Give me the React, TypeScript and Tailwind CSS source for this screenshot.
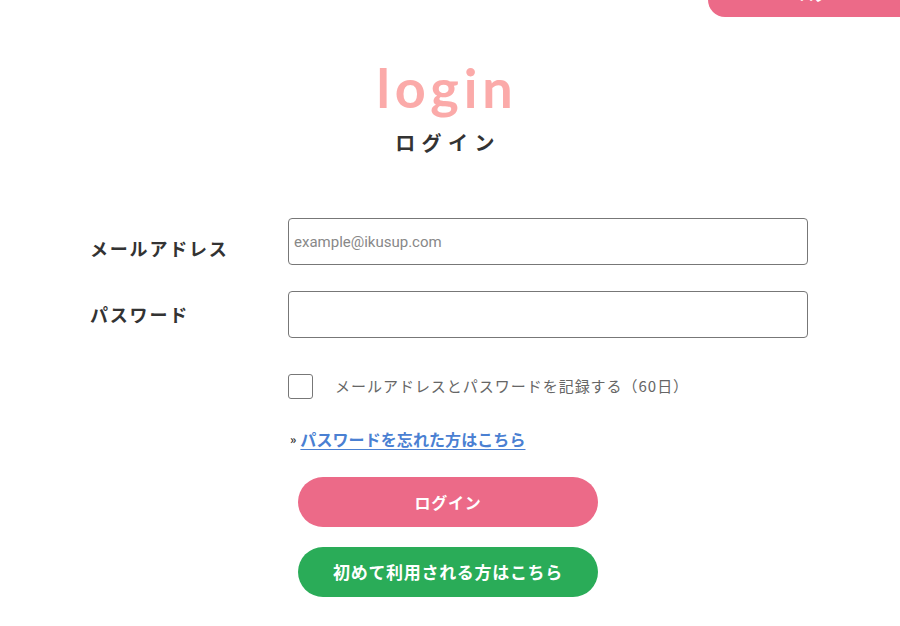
import React from 'react'

const jp = "font-['Noto_Sans_CJK_JP','Noto_Sans',sans-serif]"

export default function App() {
  return (
    <div className={`w-[900px] h-[626px] overflow-hidden bg-white text-[#333] ${jp}`}>
      {/* header remnant */}
      <div className="flex justify-end">
        <div className="w-[192px] h-[17px] bg-[#ec6a88] rounded-bl-[17px] overflow-hidden flex justify-center">
          <span className="text-white text-[15px] font-bold leading-none -mt-[14px] ml-[20px]">ログ</span>
        </div>
      </div>

      {/* title */}
      <div className="flex flex-col items-center pt-[43px] ml-[-6px]">
        <h1 className="font-['Lato',sans-serif] font-bold text-[54px] leading-[56px] tracking-[0.09em] text-[#fbaaa9]">
          login
        </h1>
        <p className="mt-[15px] text-[20px] font-bold leading-[24px] tracking-[0.32em] text-[#333] ml-[2px]">
          ログイン
        </p>
      </div>

      {/* form */}
      <div className="mt-[63px] flex flex-col">
        <div className="flex items-center h-[47px]">
          <label className="w-[288px] shrink-0 pl-[90px] text-[18px] font-bold tracking-[0.1em] mt-[14px] whitespace-nowrap">
            メールアドレス
          </label>
          <input
            className="w-[520px] h-[47px] border border-[#777] rounded-[4px] px-[5px] text-[15px] text-[#333] placeholder:text-[#888] font-['Roboto',sans-serif] outline-none"
            placeholder="example@ikusup.com"
          />
        </div>
        <div className="flex items-center h-[47px] mt-[26px]">
          <label className="w-[288px] shrink-0 pl-[90px] text-[18px] font-bold tracking-[0.1em] whitespace-nowrap">
            パスワード
          </label>
          <input
            type="password"
            className="w-[520px] h-[47px] border border-[#777] rounded-[4px] px-[5px] text-[15px] outline-none"
          />
        </div>

        <div className="flex items-center ml-[288px] mt-[36px]">
          <span className="w-[25px] h-[25px] border border-[#777] rounded-[3px] bg-white" />
          <span className="ml-[22px] text-[15px] text-[#666] tracking-[0.065em]">
            メールアドレスとパスワードを記録する（60日）
          </span>
        </div>

        <div className="flex items-center ml-[290px] mt-[28px] font-bold">
          <span className="text-[12px] text-[#333] mr-[4px]">»</span>
          <a href="#" className="text-[16px] text-[#4a80d2] underline underline-offset-[3px] tracking-[0.005em]">
            パスワードを忘れた方はこちら
          </a>
        </div>

        <div className="flex flex-col ml-[298px] mt-[26px] gap-[20px]">
          <button className="w-[300px] h-[50px] rounded-full bg-[#ec6a88] text-white text-[16px] font-bold tracking-[0.05em]">
            ログイン
          </button>
          <button className="w-[300px] h-[50px] rounded-full bg-[#2aac58] text-white text-[17px] font-bold tracking-[0.04em]">
            初めて利用される方はこちら
          </button>
        </div>
      </div>
    </div>
  )
}
